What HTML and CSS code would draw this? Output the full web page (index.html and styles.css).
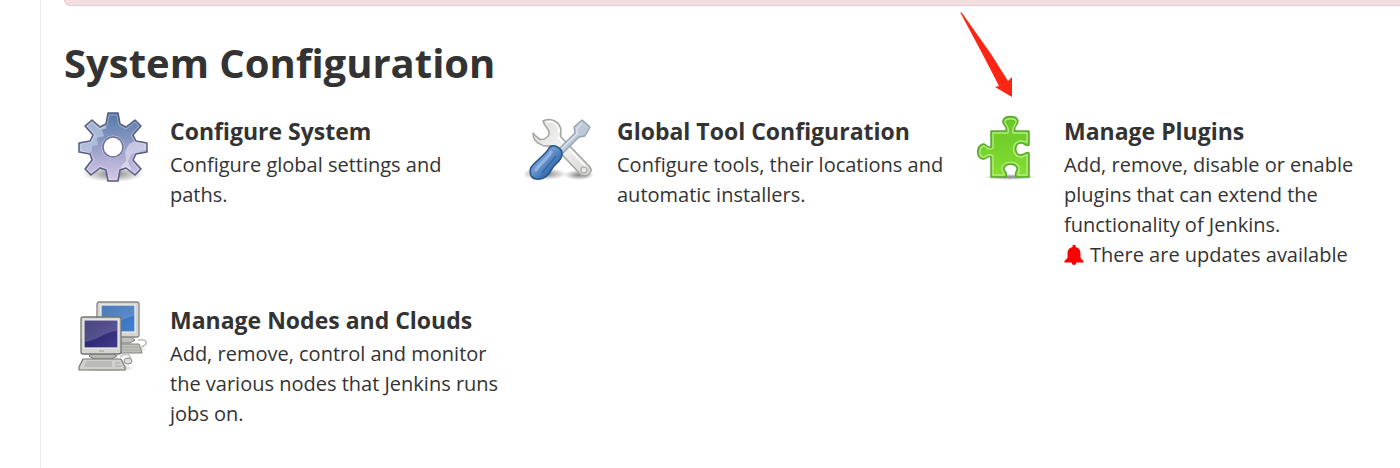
FILE: index.html
```html
<!DOCTYPE html>
<html lang="en">
<head>
    <meta charset="UTF-8">
    <meta name="viewport" content="width=device-width, initial-scale=1.0">
    <title>Manage Jenkins</title>
    <link rel="stylesheet" href="styles.css">
</head>
<body>
    <main class="main-panel">
        <div class="alert"></div>
        <h1>System Configuration</h1>

        <div class="sections">
            <a class="item" href="#configure">
                <svg class="icon" viewBox="0 0 70 70" aria-hidden="true">
                    <defs>
                        <linearGradient id="gear" x1="0" y1="0" x2="0" y2="1">
                            <stop offset="0" stop-color="#5478a8"/>
                            <stop offset=".4" stop-color="#8797c2"/>
                            <stop offset=".75" stop-color="#b9b3d8"/>
                            <stop offset="1" stop-color="#d5c7e5"/>
                        </linearGradient>
                        <radialGradient id="shadow">
                            <stop offset="0" stop-color="#000" stop-opacity=".5"/>
                            <stop offset="1" stop-color="#000" stop-opacity="0"/>
                        </radialGradient>
                        <clipPath id="gear-clip"><path d="M30 1H40L42 12L48 15L57 8L63 14L55 23L58 29L69 31V40L58 42L55 48L63 57L57 63L48 56L42 58L40 69H30L28 58L22 56L13 63L7 57L14 48L12 42L1 40V31L12 29L15 23L7 14L14 8L22 15L28 12Z"/></clipPath>
                    </defs>
                    <ellipse cx="35" cy="62" rx="31" ry="8" fill="url(#shadow)"/>
                    <path fill="url(#gear)" d="M30 1H40L42 12L48 15L57 8L63 14L55 23L58 29L69 31V40L58 42L55 48L63 57L57 63L48 56L42 58L40 69H30L28 58L22 56L13 63L7 57L14 48L12 42L1 40V31L12 29L15 23L7 14L14 8L22 15L28 12Z"/>
                    <g clip-path="url(#gear-clip)">
                        <path fill="#c1d0e4" opacity=".65" d="M0 0H20L29 16L24 18L26 24L19 26L20 33L14 34L14 39L8 42H0Z"/>
                        <path fill="#e5e2f4" opacity=".6" d="M70 30L57 29L51 32L47 40L48 49L43 54L46 61L53 57L50 49L54 42L70 37Z"/>
                    </g>
                    <path fill="none" stroke="#fff" stroke-opacity=".35" d="M31 3H39L41 13L48 17L57 10L61 14L53 23L57 30L67 32V39L57 41L53 48L61 57L57 61L48 54L41 57L39 67H31L29 57L22 54L13 61L9 57L16 48L13 41L3 39V32L13 30L17 23L9 14L14 10L22 17L29 13Z"/>
                    <path fill="none" stroke="#565d86" stroke-width="1.5" stroke-linejoin="round" d="M30 1H40L42 12L48 15L57 8L63 14L55 23L58 29L69 31V40L58 42L55 48L63 57L57 63L48 56L42 58L40 69H30L28 58L22 56L13 63L7 57L14 48L12 42L1 40V31L12 29L15 23L7 14L14 8L22 15L28 12Z"/>
                    <circle cx="35" cy="35" r="11" fill="none" stroke="#d4d6ea" opacity=".8"/>
                    <circle cx="35" cy="35" r="10" fill="#fff" stroke="#6c7194" stroke-width="1.5"/>
                </svg>
                <div class="text">
                    <h2>Configure System</h2>
                    <p>Configure global settings and paths.</p>
                </div>
            </a>

            <a class="item" href="#configure-tools">
                <svg class="icon" viewBox="0 0 70 70" aria-hidden="true">
                    <defs>
                        <linearGradient id="steel" x1="0" y1="0" x2="1" y2="1">
                            <stop offset="0" stop-color="#dcdddb"/>
                            <stop offset=".5" stop-color="#f3f3f2"/>
                            <stop offset="1" stop-color="#d2d3d0"/>
                        </linearGradient>
                        <linearGradient id="handle" x1="0" y1="0" x2="1" y2="1">
                            <stop offset="0" stop-color="#3465a4"/>
                            <stop offset=".4" stop-color="#6f9bd2"/>
                            <stop offset=".65" stop-color="#3f73b5"/>
                            <stop offset="1" stop-color="#204a87"/>
                        </linearGradient>
                    </defs>
                    <ellipse cx="19" cy="62" rx="23" ry="6" fill="url(#shadow)"/>
                    <ellipse cx="54" cy="63" rx="15" ry="5" fill="url(#shadow)"/>
                    <path fill="url(#steel)" stroke="#a3a5a1" stroke-width="1.5" stroke-linejoin="round" d="M18 9C26 5 35 10 36 18C36 21 35 23 36 25L65 55C68 60 63 66 56 63L29 34C24 33 20 36 15 32C10 30 8 25 8 21L14 27C19 29 25 24 24 20C24 17 19 14 18 9Z"/>
                    <path fill="none" stroke="#fff" stroke-width="1.5" stroke-linecap="round" d="M33 25L62 56M22 10C30 8 34 14 34 20"/>
                    <circle cx="59" cy="58" r="3" fill="#e8e9e7" stroke="#b3b5b1" stroke-width="1.5"/>
                    <path fill="#bdcad6" stroke="#91a3b2" stroke-width="1.3" stroke-linejoin="round" d="M31 40L50 21L49 15L57 8L65 15L60 24L54 25L36 43Z"/>
                    <path fill="none" stroke="#dfe8ef" stroke-width="1.2" d="M34 39L52 22L52 16L57 11"/>
                    <path fill="url(#handle)" stroke="#285284" stroke-width="1.5" d="M24 36C28 31 38 36 37 43C36 50 30 51 27 57C24 63 19 68 11 67C5 66 3 58 8 53C13 47 20 43 24 36Z"/>
                    <path fill="none" stroke="#a9c5e8" stroke-width="3" stroke-linecap="round" opacity=".65" d="M26 40C23 47 15 51 11 58"/>
                    <path fill="none" stroke="#234d84" stroke-width="1.2" opacity=".5" d="M31 44L17 61"/>
                </svg>
                <div class="text">
                    <h2>Global Tool Configuration</h2>
                    <p>Configure tools, their locations and automatic installers.</p>
                </div>
            </a>

            <a class="item" href="#plugin-manager">
                <svg class="icon" viewBox="0 0 70 70" aria-hidden="true">
                    <defs>
                        <linearGradient id="puzzle" x1="0" y1="0" x2="0" y2="1">
                            <stop offset="0" stop-color="#67c526"/>
                            <stop offset="1" stop-color="#85de32"/>
                        </linearGradient>
                    </defs>
                    <ellipse cx="38" cy="65" rx="26" ry="3" fill="url(#shadow)"/>
                    <path fill="url(#puzzle)" stroke="#5aa732" stroke-width="1.5" stroke-linejoin="round" d="M19 19H34C36 14 30 13 31 9C32 3 45 3 46 9C46 13 41 14 43 19H57V33C54 35 53 31 49 31C42 31 42 43 49 43C53 43 54 39 57 41V65H44C42 60 46 59 45 56C43 51 34 51 32 56C31 59 36 60 34 65H19V45C14 43 15 48 11 47C4 46 4 34 11 32C15 31 14 37 19 35Z"/>
                    <path fill="none" stroke="#b4ec80" stroke-width="1.3" stroke-linejoin="round" d="M21 21H36C38 14 32 13 33 9C34 6 43 6 44 9C45 13 39 15 41 21H55V30C52 30 52 29 49 29C39 29 39 45 49 45C52 45 53 43 55 43V63H46C46 60 48 59 47 55C44 48 33 49 30 55C29 59 32 60 32 63H21V44C16 40 14 46 11 45C7 44 7 36 11 34C14 33 15 40 21 36Z"/>
                </svg>
                <div class="text">
                    <h2>Manage Plugins</h2>
                    <p>Add, remove, disable or enable plugins that can extend the functionality of Jenkins.</p>
                    <p class="updates">
                        <svg class="bell" viewBox="0 0 20 22" aria-hidden="true">
                            <path fill="#f00" d="M8.500 1.500Q10 0 11.500 1.500V3C15 4 16.500 6 16.500 10V14L19.500 17V18.500H.500V17L3.500 14V10C3.500 6 5 4 8.500 3ZM7.500 18.500H12.500Q12 21 10 21Q8 21 7.500 18.500Z"/>
                        </svg>
                        There are updates available
                    </p>
                </div>
                <!-- pointer to the plugins icon -->
                <svg class="arrow" viewBox="0 0 54 86" aria-hidden="true">
                    <path fill="#ff2515" d="M0 0L2 1L31 42L48 69L52 65V85L35 75L39 74L23 43Z"/>
                </svg>
            </a>

            <a class="item" href="#computer">
                <svg class="icon" viewBox="0 0 70 70" aria-hidden="true">
                    <defs>
                        <linearGradient id="screen-back" x1="0" y1="0" x2="1" y2="1">
                            <stop offset="0" stop-color="#2c62ac"/>
                            <stop offset="1" stop-color="#4583cf"/>
                        </linearGradient>
                        <linearGradient id="screen-front" x1="0" y1="0" x2="1" y2="1">
                            <stop offset="0" stop-color="#211d63"/>
                            <stop offset="1" stop-color="#413a8b"/>
                        </linearGradient>
                    </defs>
                    <ellipse cx="45" cy="48" rx="24" ry="5" fill="url(#shadow)"/>
                    <path fill="none" stroke="#c8c9c5" stroke-width="2" d="M60 39C70 38 71 43 63 46"/>
                    <path fill="#bfc0bb" stroke="#80827d" d="M35 35H52L57 39L52 42H34ZM27 43H61L64 52H25Z"/>
                    <rect x="19" y="1" width="42" height="35" rx="2" fill="#d5d6d1" stroke="#858782" stroke-width="1.3"/>
                    <rect x="23" y="4" width="34" height="27" fill="url(#screen-back)" stroke="#f0f1ed" stroke-width="1.2"/>
                    <path fill="#fff" opacity=".15" d="M23 4H57V15C46 16 40 24 23 27Z"/>
                    <path stroke="#a4a6a1" d="M44 46H60M44 49H61"/>
                    <ellipse cx="28" cy="67" rx="29" ry="4" fill="url(#shadow)"/>
                    <path fill="none" stroke="#c8c9c5" stroke-width="2" d="M42 56C49 51 54 54 51 58L49 60"/>
                    <path fill="#b6b7b2" stroke="#747671" d="M14 52H34L39 55L34 58H16L11 55Z"/>
                    <rect x="3" y="16" width="40" height="37" rx="2" fill="#d5d6d1" stroke="#73756f" stroke-width="1.3"/>
                    <rect x="6" y="19" width="34" height="28" fill="url(#screen-front)" stroke="#f0f1ed" stroke-width="1.2"/>
                    <path fill="#fff" opacity=".18" d="M7 20H39V30C29 30 20 39 7 41Z"/>
                    <path stroke="#aeb0aa" stroke-width="1.5" d="M21 50H26"/>
                    <path fill="#d0d1cc" stroke="#747671" stroke-width="1.2" stroke-linejoin="round" d="M5 58H43L47 66V69H1V66Z"/>
                    <path stroke="#a5a7a1" d="M8 61H34M7 63H34M6 65H34M37 62H42M37 65H43"/>
                    <ellipse cx="50" cy="60" rx="4" ry="3" fill="#dedfda" stroke="#898b86"/>
                </svg>
                <div class="text">
                    <h2>Manage Nodes and Clouds</h2>
                    <p>Add, remove, control and monitor the various nodes that Jenkins runs jobs on.</p>
                </div>
            </a>
        </div>
    </main>
</body>
</html>
```

FILE: styles.css
```css
* {
    box-sizing: border-box;
}
body {
    font-family: 'Segoe UI', 'Open Sans', 'Noto Sans', sans-serif;
    font-size: 20px;
    line-height: 30px;
    background: #fff;
    color: #333;
    margin: 0;
}
.main-panel {
    min-height: 100vh;
    margin-left: 40px;
    padding-left: 23px;
    border-left: 1px solid #ececec;
}
.alert {
    height: 6px;
    background: #f2dede;
    border: 1px solid #ebccd1;
    border-width: 0 0 1px 1px;
    border-radius: 0 0 0 6px;
}
h1 {
    font-size: 40px;
    line-height: 56px;
    margin: 29px 0 17px;
}
.sections {
    display: grid;
    grid-template-columns: repeat(3, 1fr);
    gap: 27px 5px;
}
.item {
    position: relative;
    display: flex;
    align-items: flex-start;
    gap: 22px;
    padding: 4px 4px 0 14px;
    color: inherit;
    text-decoration: none;
}
.icon {
    flex: none;
    width: 70px;
    height: 70px;
}
.text {
    flex: 1;
}
h2 {
    font-size: 23px;
    line-height: 30px;
    margin: 4px 0 4px;
}
p {
    margin: 0;
}
.updates {
    display: flex;
    align-items: center;
    gap: 6px;
}
.bell {
    width: 20px;
    height: 22px;
}
.arrow {
    position: absolute;
    left: 2px;
    top: -96px;
    width: 54px;
    height: 86px;
}
```
